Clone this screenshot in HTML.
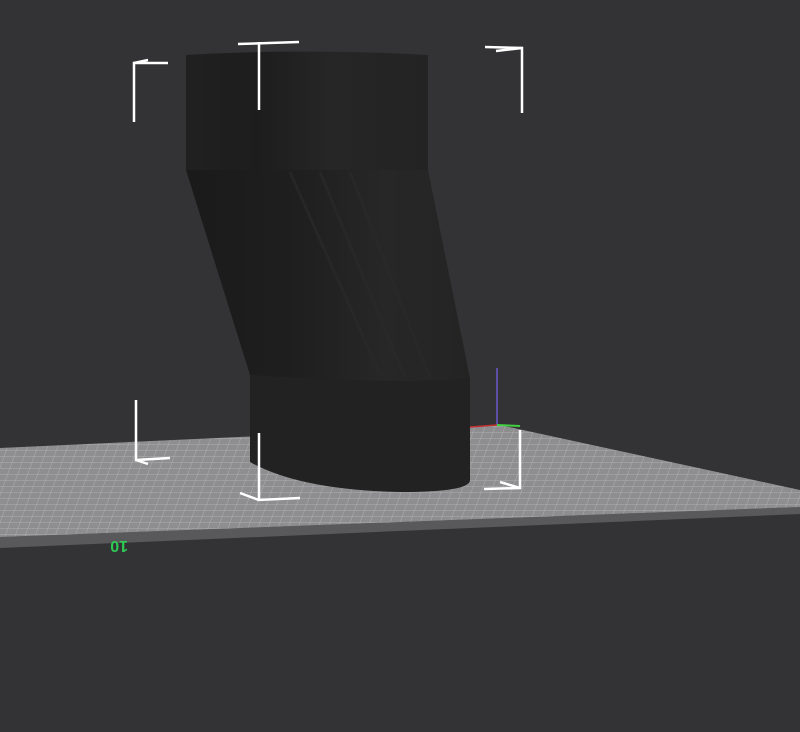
<!DOCTYPE html>
<html><head><style>
html,body{margin:0;padding:0;background:#333335;}
svg{display:block}
</style></head><body>
<svg width="800" height="732" viewBox="0 0 800 732" xmlns="http://www.w3.org/2000/svg">
<defs>
<pattern id="g" width="10" height="6" patternUnits="userSpaceOnUse" patternTransform="skewX(-20)">
<rect width="10" height="6" fill="#8e8e90"/>
<path d="M0 0H10M0 0V6" stroke="#b0b0b2" stroke-width="1"/>
</pattern>
<linearGradient id="cyl" x1="0" x2="1" y1="0" y2="0">
<stop offset="0" stop-color="#202020"/><stop offset="0.3" stop-color="#1d1d1d"/>
<stop offset="0.6" stop-color="#262626"/><stop offset="1" stop-color="#232323"/>
</linearGradient>
<linearGradient id="mid" x1="0" x2="1" y1="0" y2="0">
<stop offset="0" stop-color="#1a1a1a"/><stop offset="0.4" stop-color="#1f1f1f"/>
<stop offset="0.7" stop-color="#272727"/><stop offset="1" stop-color="#242424"/>
</linearGradient>
</defs>
<rect width="800" height="732" fill="#333335"/>
<polygon points="0,537 800,507 800,514 0,548" fill="#59595b"/>
<polygon points="0,448 500,425 800,490 800,507 0,537" fill="url(#g)"/>
<text x="82" y="553" font-family="Liberation Sans, sans-serif" font-size="16" font-weight="bold" fill="#2ecc55" transform="rotate(180 105 547)">10</text>
<path d="M250,375 L470,378 L470,480 Q470,492 400,492 Q300,490 250,462 Z" fill="#222222"/>
<path d="M186,170 L428,170 L470,378 Q400,385 250,375 Z" fill="url(#mid)"/>
<path d="M186,55 Q300,48 428,55 L428,170 L186,170 Z" fill="url(#cyl)"/>
<g stroke="#2a2a2a" stroke-width="3" opacity="0.7">
<line x1="290" y1="172" x2="380" y2="375"/><line x1="320" y1="172" x2="405" y2="378"/>
<line x1="350" y1="172" x2="430" y2="378"/>
</g>
<line x1="497" y1="425" x2="497" y2="368" stroke="#6a5acd" stroke-width="1.5"/>
<line x1="470" y1="427" x2="497" y2="425" stroke="#c03030" stroke-width="1.5"/>
<line x1="497" y1="425" x2="520" y2="426" stroke="#40d040" stroke-width="2"/>
<g stroke="#ffffff" stroke-width="2.5" fill="none">
<polyline points="168,63 134,63 134,122"/><line x1="134" y1="63" x2="148" y2="60"/>
<line x1="238" y1="44" x2="299" y2="42"/><line x1="259" y1="42" x2="259" y2="110"/>
<polyline points="485,47 522,48 522,113"/><line x1="496" y1="51" x2="522" y2="48"/>
<polyline points="136,400 136,460 170,458"/><line x1="136" y1="460" x2="148" y2="464"/>
<polyline points="259,433 259,500 300,498"/><line x1="240" y1="493" x2="259" y2="500"/>
<polyline points="520,430 520,488 484,489"/><line x1="520" y1="488" x2="500" y2="482"/>
</g>
</svg>
</body></html>
